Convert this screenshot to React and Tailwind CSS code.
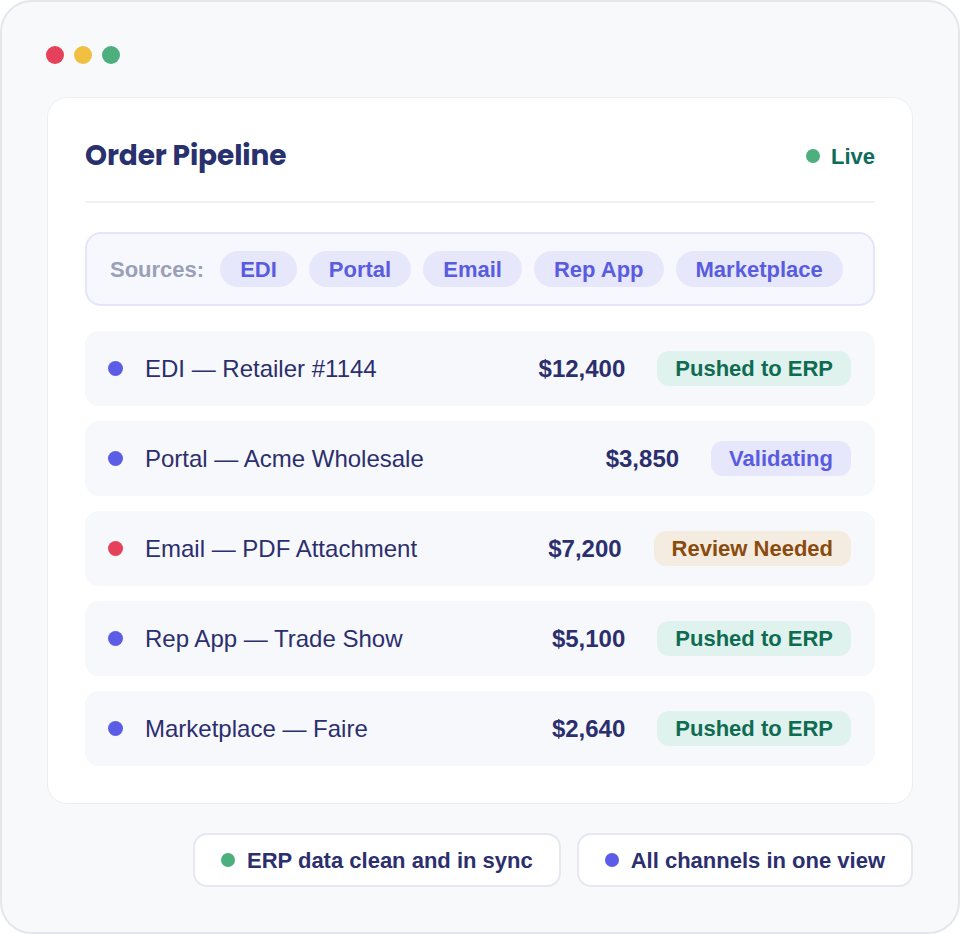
import React from 'react';

const sources = ['EDI', 'Portal', 'Email', 'Rep App', 'Marketplace'];

const orders = [
  { name: 'EDI — Retailer #1144', amount: '$12,400', status: 'pushed', dot: 'bg-[#5b5de6]' },
  { name: 'Portal — Acme Wholesale', amount: '$3,850', status: 'validating', dot: 'bg-[#5b5de6]' },
  { name: 'Email — PDF Attachment', amount: '$7,200', status: 'review', dot: 'bg-[#e5415a]' },
  { name: 'Rep App — Trade Show', amount: '$5,100', status: 'pushed', dot: 'bg-[#5b5de6]' },
  { name: 'Marketplace — Faire', amount: '$2,640', status: 'pushed', dot: 'bg-[#5b5de6]' },
];

const statusStyles = {
  pushed: { label: 'Pushed to ERP', className: 'bg-[#e0f2ee] text-[#0f6b52]' },
  validating: { label: 'Validating', className: 'bg-[#e6e7fb] text-[#5a5ce0]' },
  review: { label: 'Review Needed', className: 'bg-[#f5ece1] text-[#8a4b0f]' },
};

const StatusBadge = ({ status }) => {
  const s = statusStyles[status];
  return (
    <span className={`inline-flex items-center h-[35px] px-[18px] rounded-[12px] text-[22px] font-bold ${s.className}`}>
      {s.label}
    </span>
  );
};

export default function App() {
  return (
    <div className="w-[960px] h-[934px] bg-white" style={{ fontFamily: '"Liberation Sans", Arial, sans-serif' }}>
      <div className="w-full h-full border-2 border-[#e4e6eb] rounded-[32px] bg-[#f8f9fb] px-[45px] pt-[44px] flex flex-col">
        {/* window dots */}
        <div className="flex gap-[10px] -ml-px">
          <span className="w-[18px] h-[18px] rounded-full bg-[#e5415a]" />
          <span className="w-[18px] h-[18px] rounded-full bg-[#f1c040]" />
          <span className="w-[18px] h-[18px] rounded-full bg-[#4caf7d]" />
        </div>

        {/* main card */}
        <div className="mt-[33px] bg-white border border-[#eceef3] rounded-[20px] px-[37px] pt-[37px] pb-[37px] flex flex-col">
          <div className="flex items-center justify-between h-[42px]">
            <h1
              className="text-[28px] font-bold text-[#28306e] tracking-[-0.1px]"
              style={{ fontFamily: 'Poppins, Inter, sans-serif' }}
            >
              Order Pipeline
            </h1>
            <div className="flex items-center gap-[11px]">
              <span className="w-[14px] h-[14px] rounded-full bg-[#4caf7d]" />
              <span className="text-[22px] font-bold text-[#0f6b5a]">Live</span>
            </div>
          </div>
          <div className="mt-[24px] h-[2px] bg-[#eff0f5]" />

          {/* sources */}
          <div className="mt-[29px] h-[74px] flex items-center gap-[12px] pl-[23px] rounded-[16px] border-2 border-[#e4e5fb] bg-[#f7f8fe]">
            <span className="text-[22px] font-bold text-[#9aa0b8] mr-[4px]">Sources:</span>
            {sources.map((s) => (
              <span key={s} className="h-[36px] px-[20px] inline-flex items-center rounded-full bg-[#e6e7fb] text-[#5a5ce0] text-[22px] font-bold">
                {s}
              </span>
            ))}
          </div>

          {/* orders */}
          <div className="mt-[25px] flex flex-col gap-[15px]">
            {orders.map((o) => (
              <div key={o.name} className="h-[75px] rounded-[14px] bg-[#f7f8fb] flex items-center justify-between pl-[23px] pr-[24px]">
                <div className="flex items-center gap-[22px]">
                  <span className={`w-[15px] h-[15px] rounded-full ${o.dot}`} />
                  <span className="text-[24px] text-[#2b2f6e]">{o.name}</span>
                </div>
                <div className="flex items-center gap-[32px]">
                  <span className="text-[24px] font-bold text-[#2b2f6e]">{o.amount}</span>
                  <StatusBadge status={o.status} />
                </div>
              </div>
            ))}
          </div>
        </div>

        {/* footer chips */}
        <div className="mt-[29px] flex justify-end gap-[16px]">
          <div className="h-[54px] flex items-center gap-[12px] pl-[26px] pr-[26px] bg-white border-2 border-[#e6e7ef] rounded-[14px]">
            <span className="w-[14px] h-[14px] rounded-full bg-[#4caf7d]" />
            <span className="text-[22px] font-bold text-[#2b2f6e]">ERP data clean and in sync</span>
          </div>
          <div className="h-[54px] flex items-center gap-[12px] pl-[26px] pr-[26px] bg-white border-2 border-[#e6e7ef] rounded-[14px]">
            <span className="w-[14px] h-[14px] rounded-full bg-[#5b5de6]" />
            <span className="text-[22px] font-bold text-[#2b2f6e]">All channels in one view</span>
          </div>
        </div>
      </div>
    </div>
  );
}
